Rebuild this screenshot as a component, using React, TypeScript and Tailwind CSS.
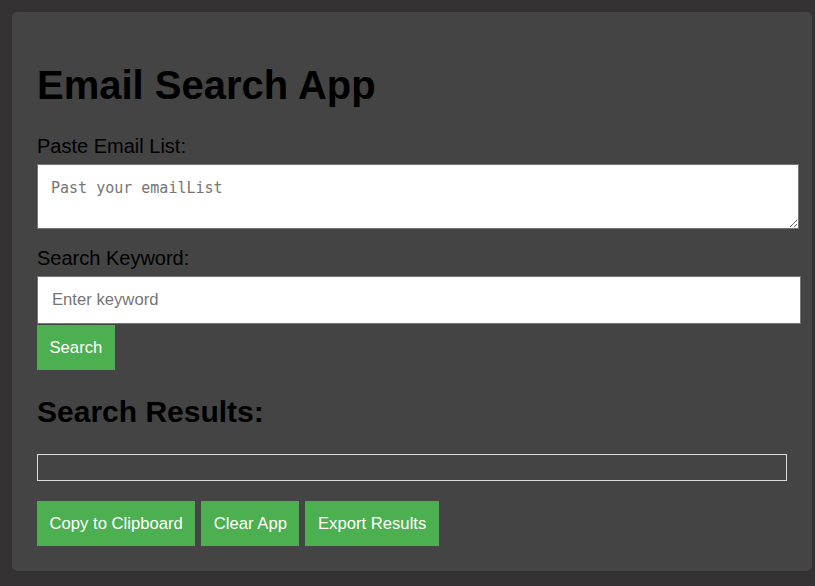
import React from 'react';

const btn =
  'h-[45px] px-[12.5px] bg-[#4caf50] text-white text-[16.67px] leading-[19px]';

export default function App() {
  return (
    <div className="min-h-screen bg-[#333132] p-[12px] font-['Liberation_Sans',Arial,sans-serif] text-black">
      <div className="w-[800px] rounded-[5px] bg-[#444444] px-[25px] pt-[25px] pb-[25px]">
        <h1 className="mt-[26px] mb-[27px] text-[40px] leading-[45px] font-bold">
          Email Search App
        </h1>

        <label className="block text-[20px] leading-[23px] mb-[6px]">
          Paste Email List:
        </label>
        <textarea
          className="block w-[762px] h-[65px] mb-[18px] bg-white border border-[#767676] pt-[14px] px-[13px] text-[15px] leading-[18px] font-['DejaVu_Sans_Mono',monospace] placeholder:text-[#757575] outline-none"
          placeholder="Past your emailList"
        />

        <label className="block text-[20px] leading-[23px] mb-[6px]">
          Search Keyword:
        </label>
        <input
          className="block w-[764px] h-[48px] bg-white border border-[#767676] px-[14px] text-[16.67px] placeholder:text-[#757575] outline-none"
          placeholder="Enter keyword"
        />
        <div className="mt-[1px] flex">
          <button className={btn}>Search</button>
        </div>

        <h2 className="mt-[25px] mb-[26px] text-[30px] leading-[33px] font-bold">
          Search Results:
        </h2>
        <div className="w-[750px] h-[27px] border border-[#dddddd]" />

        <div className="mt-[20px] flex gap-[6px]">
          <button className={btn}>Copy to Clipboard</button>
          <button className={btn}>Clear App</button>
          <button className={btn}>Export Results</button>
        </div>
      </div>
    </div>
  );
}
